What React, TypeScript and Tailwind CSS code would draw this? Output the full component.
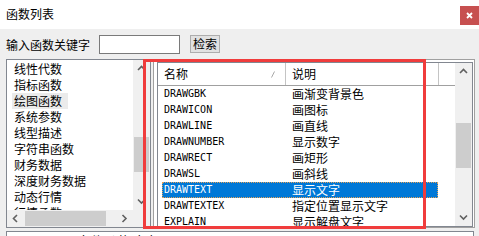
import React from 'react';

const categories = ['线性代数', '指标函数', '绘图函数', '系统参数', '线型描述', '字符串函数', '财务数据', '深度财务数据', '动态行情', '行情函数'];

const funcs: [string, string][] = [
  ['DRAWGBK', '画渐变背景色'],
  ['DRAWICON', '画图标'],
  ['DRAWLINE', '画直线'],
  ['DRAWNUMBER', '显示数字'],
  ['DRAWRECT', '画矩形'],
  ['DRAWSL', '画斜线'],
  ['DRAWTEXT', '显示文字'],
  ['DRAWTEXTEX', '指定位置显示文字'],
  ['EXPLAIN', '显示解盘文字'],
];

function Chevron({ dir }: { dir: 'up' | 'down' | 'left' | 'right' }) {
  const pts = {
    up: '1,5 4.5,1.5 8,5',
    down: '1,1.5 4.5,5 8,1.5',
    left: '5,1 1.5,4.5 5,8',
    right: '1.5,1 5,4.5 1.5,8',
  }[dir];
  const vertical = dir === 'up' || dir === 'down';
  return (
    <svg width={vertical ? 9 : 7} height={vertical ? 7 : 9} viewBox={vertical ? '0 0 9 7' : '0 0 7 9'}>
      <polyline points={pts} fill="none" stroke="#606060" strokeWidth="1.6" />
    </svg>
  );
}

function VScroll({ thumbTop, thumbHeight }: { thumbTop: number; thumbHeight: number }) {
  return (
    <div className="w-[17px] h-full bg-[#f0f0f0] flex flex-col">
      <div className="h-[17px] flex items-center justify-center">
        <Chevron dir="up" />
      </div>
      <div className="mx-[1px] bg-[#cdcdcd]" style={{ marginTop: thumbTop, height: thumbHeight }} />
      <div className="mt-auto h-[17px] flex items-center justify-center">
        <Chevron dir="down" />
      </div>
    </div>
  );
}

export default function App() {
  return (
    <div className="relative w-[479px] h-[236px] overflow-hidden bg-[#efefef] text-[12px] text-black font-['Noto_Sans_CJK_SC',sans-serif]">
      {/* title bar */}
      <div className="h-[29px] bg-white flex items-start">
        <span className="ml-[6px] mt-[6px] leading-[16px]">函数列表</span>
        <div className="ml-auto mt-[6px] w-[19px] h-[19px] bg-[#c75050] flex items-center justify-center">
          <svg width="7" height="7" viewBox="0 0 7 7">
            <path d="M1 1L6 6M6 1L1 6" stroke="white" strokeWidth="1.8" />
          </svg>
        </div>
      </div>

      {/* search row */}
      <div className="h-[30px] flex items-start pt-[6px] pl-[6px]">
        <span className="leading-[19px]">输入函数关键字</span>
        <input className="ml-[9px] w-[81px] h-[19px] border border-[#7a7a7a] bg-white outline-none" />
        <button className="ml-[10px] w-[30px] h-[18px] border border-[#adadad] bg-[#e1e1e1] leading-[16px] text-[12px]">
          检索
        </button>
      </div>

      {/* main panels */}
      <div className="flex h-[169px]">
        <div className="ml-[6px] w-[145px] h-full border border-[#828790] bg-white flex flex-col">
          <div className="h-[150px] flex">
            <div className="flex-1 overflow-hidden pt-[1px] pl-[5px]">
              {categories.map((c, i) => (
                <div key={c} className="h-[16px] leading-[16px] whitespace-nowrap">
                  <span className={`inline-block pl-[2px] pr-[6px] ${i === 2 ? 'bg-[#ebebeb]' : ''}`}>{c}</span>
                </div>
              ))}
            </div>
            <VScroll thumbTop={60} thumbHeight={35} />
          </div>
          <div className="h-[17px] flex bg-[#f0f0f0]">
            <div className="w-[126px] flex items-stretch">
              <div className="w-[17px] flex items-center justify-center">
                <Chevron dir="left" />
              </div>
              <div className="ml-[1px] my-[1px] w-[81px] bg-[#cdcdcd]" />
              <div className="ml-auto w-[17px] flex items-center justify-center">
                <Chevron dir="right" />
              </div>
            </div>
          </div>
        </div>

        <div className="ml-[2px] w-[322px] h-full border border-[#a0a0a0] bg-white pl-[3px] pr-[1px] pt-[2px]">
          <div className="h-full border border-[#828790] flex">
            <div className="flex-1 flex flex-col overflow-hidden">
              <div className="h-[23px] flex border-b border-[#a0a0a0] shrink-0">
                <div className="w-[128px] border-r border-[#c4c4c4] pl-[6px] flex items-center">
                  <span className="leading-[16px]">名称</span>
                  <svg className="ml-auto mr-[10px]" width="4" height="7" viewBox="0 0 4 7">
                    <path d="M3.5 0.5L0.5 6.5" stroke="#a8a8a8" strokeWidth="1" />
                  </svg>
                </div>
                <div className="w-[153px] border-r border-[#c4c4c4] pl-[6px] flex items-center">
                  <span className="leading-[16px]">说明</span>
                </div>
              </div>
              <div className="pl-[4px]">
                {funcs.map(([name, desc], i) => {
                  const sel = i === 6;
                  return (
                    <div
                      key={name}
                      className={`h-[16px] w-[276px] flex whitespace-nowrap ${
                        sel ? 'bg-[#0078d7] text-white outline-1 outline-dotted outline-[#e3a25a] -outline-offset-1' : ''
                      }`}
                    >
                      <div className="w-[124px] pl-[2px] leading-[16px] text-[10px] font-['DejaVu_Sans_Mono',monospace]">
                        {name}
                      </div>
                      <div className="pl-[6px] leading-[16px]">{desc}</div>
                    </div>
                  );
                })}
              </div>
            </div>
            <VScroll thumbTop={43} thumbHeight={45} />
          </div>
        </div>
      </div>

      {/* detail box, cut off at the bottom */}
      <div className="mt-[3px] ml-[6px] mr-[5px] h-[10px] border-t border-l border-r border-[#828790] bg-white overflow-hidden pl-[6px]">
        <span className="leading-[14px] whitespace-nowrap">DRAWTEXT(条件,价格,文字)</span>
      </div>

      {/* red annotation rectangle */}
      <div className="absolute left-[143px] top-[59px] w-[283px] h-[170px] border-[3px] border-[#f03c3c] pointer-events-none" />
    </div>
  );
}
